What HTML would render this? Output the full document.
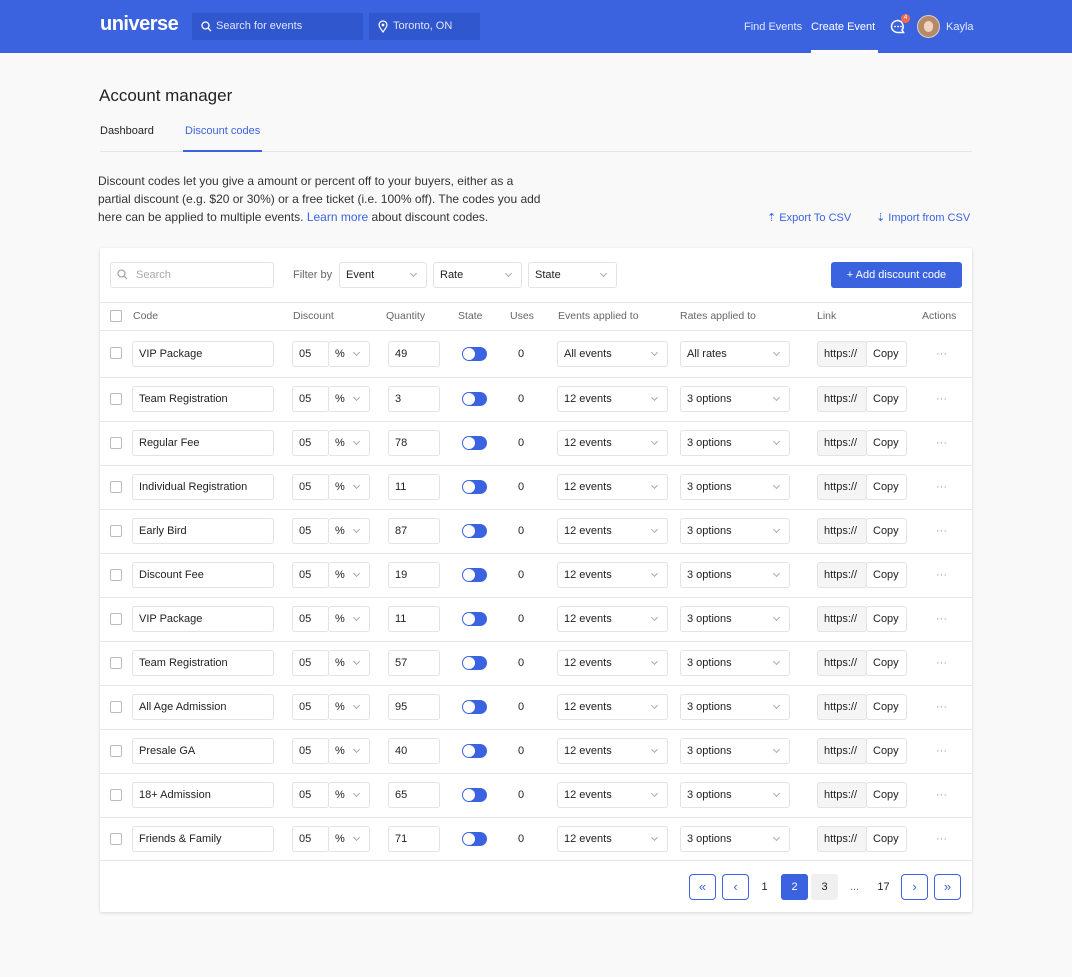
<!DOCTYPE html>
<html><head><meta charset="utf-8">
<style>
*{box-sizing:border-box;margin:0;padding:0}
body{width:1072px;height:977px;background:#f9f9f9;font-family:"Liberation Sans",sans-serif;color:#222;position:relative;overflow:hidden;font-size:11px}
.hdr{position:absolute;left:0;top:0;width:1072px;height:53px;background:#3b63e0}
.logo{position:absolute;left:100px;top:13px;color:#fff;font-weight:bold;font-size:20px;letter-spacing:-0.5px}
.hs{position:absolute;top:13px;height:27px;background:#3157cf;color:#dfe6fb;font-size:11px;line-height:27px}
.nav{position:absolute;top:21px;color:#fff;font-size:11px}
h1{position:absolute;left:99px;top:86px;font-size:17px;font-weight:normal;color:#222}
.tab{position:absolute;top:125px;font-size:11px}
.desc{position:absolute;left:98px;top:172px;width:480px;font-size:12px;line-height:18px;color:#333;white-space:nowrap}
.lnk{color:#3b63e0}
.csv{position:absolute;top:211px;color:#3b63e0;font-size:11px}
.card{position:absolute;left:100px;top:248px;width:872px;height:664px;background:#fff;box-shadow:0 1px 3px rgba(0,0,0,.15);border-radius:2px}
.a{position:absolute}
.inp{position:absolute;height:26px;border:1px solid #e3e3e3;border-radius:3px;background:#fff;line-height:24px;padding-left:6px;font-size:11px;color:#222}
.sel::after{content:"";position:absolute;right:10px;top:8px;width:4px;height:4px;border-right:1px solid #aaa;border-bottom:1px solid #aaa;transform:rotate(45deg)}
.cb{position:absolute;left:10px;width:12px;height:12px;border:1px solid #bbb;border-radius:2px;background:#fff}
.th{position:absolute;top:62px;font-size:10.5px;color:#666}
.row{position:absolute;left:0;width:872px;border-top:1px solid #e6e6e6}
.tg{position:absolute;left:362px;width:25px;height:14px;border-radius:7px;background:#3b63e0}
.tg::before{content:"";position:absolute;left:1px;top:1px;width:12px;height:12px;border-radius:6px;background:#fff}
.dt{position:absolute;left:836px;color:#999}
.pg{position:absolute;top:626px;width:27px;height:26px;border:1px solid #3b63e0;border-radius:4px;color:#3b63e0;text-align:center;line-height:23px;font-size:13px}
.pn{position:absolute;top:626px;width:27px;height:26px;text-align:center;line-height:26px;font-size:11px}
</style></head><body>
<div class="hdr">
<div class="logo">universe</div>
<div class="hs" style="left:192px;width:171px;padding-left:24px">Search for events</div>
<svg class="a" style="left:201px;top:21px" width="11" height="11" viewBox="0 0 11 11"><circle cx="4.5" cy="4.5" r="3.5" fill="none" stroke="#fff" stroke-width="1.3"/><path d="M7 7l3 3" stroke="#fff" stroke-width="1.3"/></svg>
<div class="hs" style="left:369px;width:111px;padding-left:24px">Toronto, ON</div>
<svg class="a" style="left:378px;top:20px" width="10" height="13" viewBox="0 0 10 13"><path d="M5 12C2 8 1 6.5 1 5a4 4 0 0 1 8 0c0 1.5-1 3-4 7z" fill="none" stroke="#fff" stroke-width="1.2"/><circle cx="5" cy="5" r="1.4" fill="#fff"/></svg>
<div class="nav" style="left:744px;color:#e3e9fb">Find Events</div>
<div class="nav" style="left:811px">Create Event</div>
<div class="a" style="left:811px;top:50px;width:67px;height:3px;background:#fff"></div>
<svg class="a" style="left:889px;top:19px" width="18" height="16" viewBox="0 0 18 16"><path d="M9 1.5a6.5 6 0 1 0 0 12h5.5l-1.5-2.5A6 6 0 0 0 9 1.5z" fill="none" stroke="#fff" stroke-width="1.5"/><circle cx="6" cy="7.5" r=".9" fill="#fff"/><circle cx="9" cy="7.5" r=".9" fill="#fff"/><circle cx="12" cy="7.5" r=".9" fill="#fff"/></svg>
<div class="a" style="left:901px;top:14px;width:9px;height:9px;border-radius:5px;background:#f26a4b;color:#fff;font-size:6px;text-align:center;line-height:9px">4</div>
<div class="a" style="left:917px;top:15px;width:23px;height:23px;border-radius:12px;background:#b48a6a;border:1px solid #dcd2c0;overflow:hidden"><div style="margin:5px auto 0;width:9px;height:11px;border-radius:5px;background:#f0d4c0"></div></div>
<div class="nav" style="left:946px;color:#e3e9fb">Kayla</div>
</div>
<h1>Account manager</h1>
<div class="tab" style="left:100px;color:#222">Dashboard</div>
<div class="tab" style="left:185px;color:#3b63e0">Discount codes</div>
<div class="a" style="left:100px;top:151px;width:872px;height:1px;background:#e5e5e5"></div>
<div class="a" style="left:183px;top:150px;width:79px;height:2px;background:#3b63e0"></div>
<div class="desc">Discount codes let you give a amount or percent off to your buyers, either as a<br>partial discount (e.g. $20 or 30%) or a free ticket (i.e. 100% off). The codes you add<br>here can be applied to multiple events. <span class="lnk">Learn more</span> about discount codes.</div>
<div class="csv" style="left:767px">⇡ Export To CSV</div>
<div class="csv" style="left:876px">⇣ Import from CSV</div>
<div class="card">
<div class="inp" style="left:10px;top:14px;width:164px;padding-left:25px;color:#aaa">Search</div>
<svg class="a" style="left:17px;top:21px" width="11" height="11" viewBox="0 0 11 11"><circle cx="4.5" cy="4.5" r="3.5" fill="none" stroke="#999" stroke-width="1.1"/><path d="M7 7l3 3" stroke="#999" stroke-width="1.1"/></svg>
<div class="a" style="left:193px;top:21px;color:#666">Filter by</div>
<div class="inp sel" style="left:239px;top:14px;width:88px">Event</div>
<div class="inp sel" style="left:333px;top:14px;width:89px">Rate</div>
<div class="inp sel" style="left:428px;top:14px;width:89px">State</div>
<div class="a" style="left:731px;top:14px;width:131px;height:26px;background:#3b63e0;border-radius:3px;color:#fff;text-align:center;line-height:26px;font-size:11px">+ Add discount code</div>
<div class="row" style="top:54px;height:28px"></div>
<div class="cb" style="top:62px"></div>
<div class="th" style="left:33px">Code</div><div class="th" style="left:193px">Discount</div><div class="th" style="left:286px">Quantity</div><div class="th" style="left:358px">State</div><div class="th" style="left:410px">Uses</div><div class="th" style="left:458px">Events applied to</div><div class="th" style="left:580px">Rates applied to</div><div class="th" style="left:717px">Link</div><div class="th" style="left:822px">Actions</div>

<div class="row" style="top:82px;height:47px">
<div class="cb" style="top:16px"></div><div class="inp" style="left:32px;top:10px;width:142px">VIP Package</div><div class="inp" style="left:192px;top:10px;width:37px">05</div><div class="inp sel" style="left:228px;top:10px;width:42px">%</div><div class="inp" style="left:288px;top:10px;width:52px">49</div><div class="tg" style="top:16px"></div><div class="a" style="left:418px;top:17px">0</div><div class="inp sel" style="left:457px;top:10px;width:111px">All events</div><div class="inp sel" style="left:580px;top:10px;width:110px">All rates</div><div class="inp" style="left:717px;top:10px;width:50px;background:#f5f5f5">https://</div><div class="inp" style="left:766px;top:10px;width:41px">Copy</div><div class="dt" style="top:17px">···</div></div>
<div class="row" style="top:129px;height:44px">
<div class="cb" style="top:15px"></div><div class="inp" style="left:32px;top:8px;width:142px">Team Registration</div><div class="inp" style="left:192px;top:8px;width:37px">05</div><div class="inp sel" style="left:228px;top:8px;width:42px">%</div><div class="inp" style="left:288px;top:8px;width:52px">3</div><div class="tg" style="top:14px"></div><div class="a" style="left:418px;top:15px">0</div><div class="inp sel" style="left:457px;top:8px;width:111px">12 events</div><div class="inp sel" style="left:580px;top:8px;width:110px">3 options</div><div class="inp" style="left:717px;top:8px;width:50px;background:#f5f5f5">https://</div><div class="inp" style="left:766px;top:8px;width:41px">Copy</div><div class="dt" style="top:15px">···</div></div>
<div class="row" style="top:173px;height:44px">
<div class="cb" style="top:15px"></div><div class="inp" style="left:32px;top:8px;width:142px">Regular Fee</div><div class="inp" style="left:192px;top:8px;width:37px">05</div><div class="inp sel" style="left:228px;top:8px;width:42px">%</div><div class="inp" style="left:288px;top:8px;width:52px">78</div><div class="tg" style="top:14px"></div><div class="a" style="left:418px;top:15px">0</div><div class="inp sel" style="left:457px;top:8px;width:111px">12 events</div><div class="inp sel" style="left:580px;top:8px;width:110px">3 options</div><div class="inp" style="left:717px;top:8px;width:50px;background:#f5f5f5">https://</div><div class="inp" style="left:766px;top:8px;width:41px">Copy</div><div class="dt" style="top:15px">···</div></div>
<div class="row" style="top:217px;height:44px">
<div class="cb" style="top:15px"></div><div class="inp" style="left:32px;top:8px;width:142px">Individual Registration</div><div class="inp" style="left:192px;top:8px;width:37px">05</div><div class="inp sel" style="left:228px;top:8px;width:42px">%</div><div class="inp" style="left:288px;top:8px;width:52px">11</div><div class="tg" style="top:14px"></div><div class="a" style="left:418px;top:15px">0</div><div class="inp sel" style="left:457px;top:8px;width:111px">12 events</div><div class="inp sel" style="left:580px;top:8px;width:110px">3 options</div><div class="inp" style="left:717px;top:8px;width:50px;background:#f5f5f5">https://</div><div class="inp" style="left:766px;top:8px;width:41px">Copy</div><div class="dt" style="top:15px">···</div></div>
<div class="row" style="top:261px;height:44px">
<div class="cb" style="top:15px"></div><div class="inp" style="left:32px;top:8px;width:142px">Early Bird</div><div class="inp" style="left:192px;top:8px;width:37px">05</div><div class="inp sel" style="left:228px;top:8px;width:42px">%</div><div class="inp" style="left:288px;top:8px;width:52px">87</div><div class="tg" style="top:14px"></div><div class="a" style="left:418px;top:15px">0</div><div class="inp sel" style="left:457px;top:8px;width:111px">12 events</div><div class="inp sel" style="left:580px;top:8px;width:110px">3 options</div><div class="inp" style="left:717px;top:8px;width:50px;background:#f5f5f5">https://</div><div class="inp" style="left:766px;top:8px;width:41px">Copy</div><div class="dt" style="top:15px">···</div></div>
<div class="row" style="top:305px;height:44px">
<div class="cb" style="top:15px"></div><div class="inp" style="left:32px;top:8px;width:142px">Discount Fee</div><div class="inp" style="left:192px;top:8px;width:37px">05</div><div class="inp sel" style="left:228px;top:8px;width:42px">%</div><div class="inp" style="left:288px;top:8px;width:52px">19</div><div class="tg" style="top:14px"></div><div class="a" style="left:418px;top:15px">0</div><div class="inp sel" style="left:457px;top:8px;width:111px">12 events</div><div class="inp sel" style="left:580px;top:8px;width:110px">3 options</div><div class="inp" style="left:717px;top:8px;width:50px;background:#f5f5f5">https://</div><div class="inp" style="left:766px;top:8px;width:41px">Copy</div><div class="dt" style="top:15px">···</div></div>
<div class="row" style="top:349px;height:44px">
<div class="cb" style="top:15px"></div><div class="inp" style="left:32px;top:8px;width:142px">VIP Package</div><div class="inp" style="left:192px;top:8px;width:37px">05</div><div class="inp sel" style="left:228px;top:8px;width:42px">%</div><div class="inp" style="left:288px;top:8px;width:52px">11</div><div class="tg" style="top:14px"></div><div class="a" style="left:418px;top:15px">0</div><div class="inp sel" style="left:457px;top:8px;width:111px">12 events</div><div class="inp sel" style="left:580px;top:8px;width:110px">3 options</div><div class="inp" style="left:717px;top:8px;width:50px;background:#f5f5f5">https://</div><div class="inp" style="left:766px;top:8px;width:41px">Copy</div><div class="dt" style="top:15px">···</div></div>
<div class="row" style="top:393px;height:44px">
<div class="cb" style="top:15px"></div><div class="inp" style="left:32px;top:8px;width:142px">Team Registration</div><div class="inp" style="left:192px;top:8px;width:37px">05</div><div class="inp sel" style="left:228px;top:8px;width:42px">%</div><div class="inp" style="left:288px;top:8px;width:52px">57</div><div class="tg" style="top:14px"></div><div class="a" style="left:418px;top:15px">0</div><div class="inp sel" style="left:457px;top:8px;width:111px">12 events</div><div class="inp sel" style="left:580px;top:8px;width:110px">3 options</div><div class="inp" style="left:717px;top:8px;width:50px;background:#f5f5f5">https://</div><div class="inp" style="left:766px;top:8px;width:41px">Copy</div><div class="dt" style="top:15px">···</div></div>
<div class="row" style="top:437px;height:44px">
<div class="cb" style="top:15px"></div><div class="inp" style="left:32px;top:8px;width:142px">All Age Admission</div><div class="inp" style="left:192px;top:8px;width:37px">05</div><div class="inp sel" style="left:228px;top:8px;width:42px">%</div><div class="inp" style="left:288px;top:8px;width:52px">95</div><div class="tg" style="top:14px"></div><div class="a" style="left:418px;top:15px">0</div><div class="inp sel" style="left:457px;top:8px;width:111px">12 events</div><div class="inp sel" style="left:580px;top:8px;width:110px">3 options</div><div class="inp" style="left:717px;top:8px;width:50px;background:#f5f5f5">https://</div><div class="inp" style="left:766px;top:8px;width:41px">Copy</div><div class="dt" style="top:15px">···</div></div>
<div class="row" style="top:481px;height:44px">
<div class="cb" style="top:15px"></div><div class="inp" style="left:32px;top:8px;width:142px">Presale GA</div><div class="inp" style="left:192px;top:8px;width:37px">05</div><div class="inp sel" style="left:228px;top:8px;width:42px">%</div><div class="inp" style="left:288px;top:8px;width:52px">40</div><div class="tg" style="top:14px"></div><div class="a" style="left:418px;top:15px">0</div><div class="inp sel" style="left:457px;top:8px;width:111px">12 events</div><div class="inp sel" style="left:580px;top:8px;width:110px">3 options</div><div class="inp" style="left:717px;top:8px;width:50px;background:#f5f5f5">https://</div><div class="inp" style="left:766px;top:8px;width:41px">Copy</div><div class="dt" style="top:15px">···</div></div>
<div class="row" style="top:525px;height:44px">
<div class="cb" style="top:15px"></div><div class="inp" style="left:32px;top:8px;width:142px">18+ Admission</div><div class="inp" style="left:192px;top:8px;width:37px">05</div><div class="inp sel" style="left:228px;top:8px;width:42px">%</div><div class="inp" style="left:288px;top:8px;width:52px">65</div><div class="tg" style="top:14px"></div><div class="a" style="left:418px;top:15px">0</div><div class="inp sel" style="left:457px;top:8px;width:111px">12 events</div><div class="inp sel" style="left:580px;top:8px;width:110px">3 options</div><div class="inp" style="left:717px;top:8px;width:50px;background:#f5f5f5">https://</div><div class="inp" style="left:766px;top:8px;width:41px">Copy</div><div class="dt" style="top:15px">···</div></div>
<div class="row" style="top:569px;height:44px;border-bottom:1px solid #e6e6e6">
<div class="cb" style="top:15px"></div><div class="inp" style="left:32px;top:8px;width:142px">Friends &amp; Family</div><div class="inp" style="left:192px;top:8px;width:37px">05</div><div class="inp sel" style="left:228px;top:8px;width:42px">%</div><div class="inp" style="left:288px;top:8px;width:52px">71</div><div class="tg" style="top:14px"></div><div class="a" style="left:418px;top:15px">0</div><div class="inp sel" style="left:457px;top:8px;width:111px">12 events</div><div class="inp sel" style="left:580px;top:8px;width:110px">3 options</div><div class="inp" style="left:717px;top:8px;width:50px;background:#f5f5f5">https://</div><div class="inp" style="left:766px;top:8px;width:41px">Copy</div><div class="dt" style="top:15px">···</div></div>

<div class="pg" style="left:589px">«</div>
<div class="pg" style="left:622px">‹</div>
<div class="pn" style="left:651px">1</div>
<div class="pn" style="left:681px;background:#3b63e0;color:#fff;border-radius:3px">2</div>
<div class="pn" style="left:711px;background:#f0f0f0;border-radius:3px">3</div>
<div class="pn" style="left:741px;color:#777">...</div>
<div class="pn" style="left:770px">17</div>
<div class="pg" style="left:801px">›</div>
<div class="pg" style="left:834px">»</div>
</div>
</body></html>
